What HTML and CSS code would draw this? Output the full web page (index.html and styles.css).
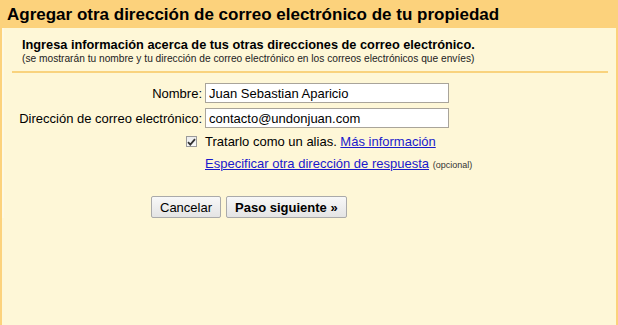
FILE: index.html
```html
<!DOCTYPE html>
<html lang="es">
<head>
    <meta charset="UTF-8">
    <title>Agregar otra dirección de correo electrónico</title>
    <link rel="stylesheet" href="styles.css">
</head>
<body>
    <div class="dialog">
        <h1 class="dialog-title">Agregar otra dirección de correo electrónico de tu propiedad</h1>
        <div class="dialog-body">
            <div class="intro">
                <h2>Ingresa información acerca de tus otras direcciones de correo electrónico.</h2>
                <p>(se mostrarán tu nombre y tu dirección de correo electrónico en los correos electrónicos que envíes)</p>
            </div>

            <form class="form">
                <div class="row">
                    <label for="name">Nombre:</label>
                    <input id="name" type="text" value="Juan Sebastian Aparicio">
                </div>
                <div class="row">
                    <label for="email">Dirección de correo electrónico:</label>
                    <input id="email" type="text" value="contacto@undonjuan.com">
                </div>
                <div class="row row-check">
                    <span class="check-cell">
                        <span class="checkbox">
                            <svg width="9" height="8" viewBox="0 0 9 8">
                                <path d="M1 4.2 L3.3 6.6 L8 1.2" fill="none" stroke="#333" stroke-width="1.8"/>
                            </svg>
                        </span>
                    </span>
                    <span>Tratarlo como un alias. <a href="#">Más información</a></span>
                </div>
                <div class="row row-link">
                    <span></span>
                    <span><a href="#">Especificar otra dirección de respuesta</a> <small>(opcional)</small></span>
                </div>
                <div class="actions">
                    <button type="button">Cancelar</button>
                    <button type="button" class="primary">Paso siguiente »</button>
                </div>
            </form>
        </div>
    </div>
</body>
</html>
```

FILE: styles.css
```css
html, body {
    height: 100%;
}

body {
    margin: 0;
    font-family: "Liberation Sans", Arial, sans-serif;
    color: #000;
    background: #fef7d7;
}

.dialog {
    min-height: 100%;
    box-sizing: border-box;
    border-left: 2px solid #fcd27c;
    border-right: 2px solid #fcd27c;
    background: #fef7d7;
}

.dialog-title {
    margin: 0 -2px;
    height: 28px;
    padding: 5px 0 0 7px;
    box-sizing: border-box;
    font-size: 17px;
    font-weight: bold;
    background: #fcd27c;
}

.dialog-body {
    padding: 0 8px;
    border-left: 2px solid #fef9e3;
}

.intro {
    padding: 9px 0 7px 10px;
    border-bottom: 2px solid #f9d37e;
}

.intro h2 {
    margin: 0;
    font-size: 12.75px;
    font-weight: bold;
    line-height: 16px;
}

.intro p {
    margin: 0;
    font-size: 10.2px;
    line-height: 11px;
    color: #222;
}

.form {
    padding-top: 10px;
}

.row {
    display: grid;
    grid-template-columns: 190px auto;
    column-gap: 3px;
    align-items: center;
    font-size: 13px;
    margin-bottom: 5px;
}

.row label {
    text-align: right;
}

.row input[type="text"] {
    width: 244px;
    height: 20px;
    box-sizing: border-box;
    margin: 0;
    padding: 0 3px;
    border: 1px solid #a9a49a;
    font-family: "Liberation Sans", Arial, sans-serif;
    font-size: 13px;
    color: #000;
    background: #fff;
}

.row-check {
    margin-top: 6px;
    margin-bottom: 7px;
}

.check-cell {
    display: flex;
    justify-content: flex-end;
}

.checkbox {
    width: 11px;
    height: 11px;
    margin-right: 5px;
    box-sizing: border-box;
    display: flex;
    align-items: center;
    justify-content: center;
    border: 1px solid #9a9a9a;
    background: linear-gradient(#ececec, #fafafa);
}

.row a {
    color: #1a1acc;
    text-decoration: underline;
}

.row small {
    font-size: 9px;
    color: #333;
}

.actions {
    padding: 20px 0 0 139px;
    display: flex;
    gap: 5px;
}

.actions button {
    height: 22px;
    padding: 0 8px;
    border: 1px solid #aaa;
    border-radius: 2px;
    background: linear-gradient(#f8f8f8, #e4e4e4);
    font-family: "Liberation Sans", Arial, sans-serif;
    font-size: 13px;
    color: #000;
}

.actions .primary {
    font-weight: bold;
}
```
